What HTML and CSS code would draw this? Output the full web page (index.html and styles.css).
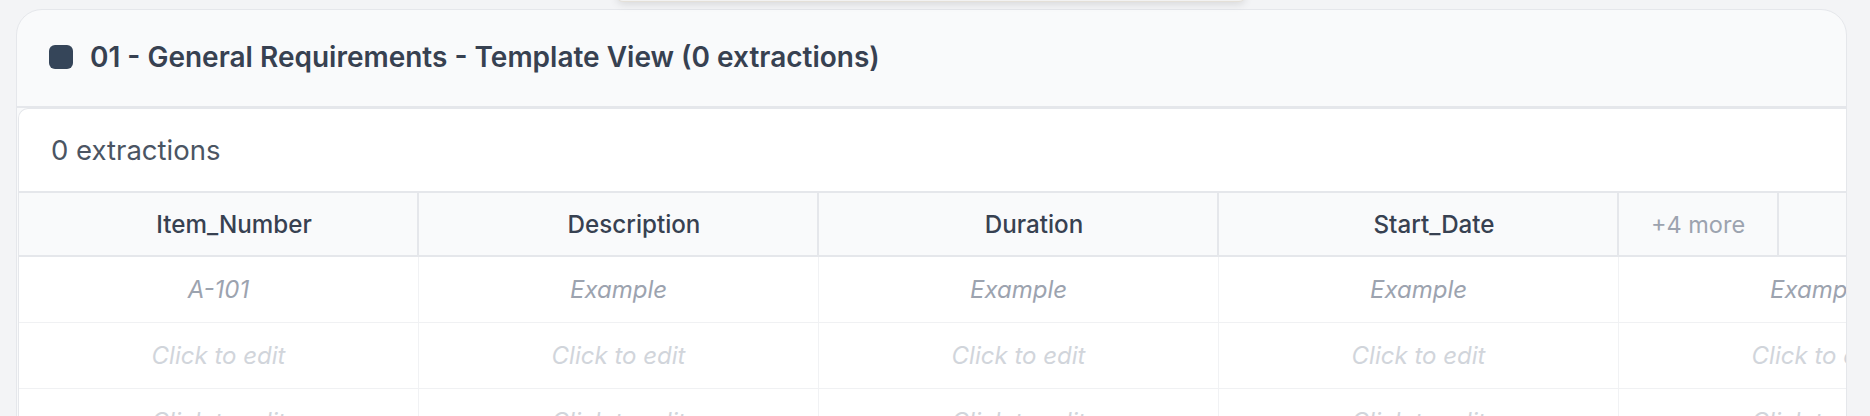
FILE: index.html
```html
<!DOCTYPE html>
<html lang="en">
<head>
<meta charset="utf-8">
<title>Template View</title>
<link rel="stylesheet" href="styles.css">
</head>
<body>
<div class="page">
  <div class="floating-bar"></div>
  <section class="card">
    <header class="card-header">
      <span class="cat-icon"></span>
      <h2 class="card-title">01 - General Requirements - Template View (0 extractions)</h2>
    </header>
    <div class="card-body">
      <div class="panel">
        <div class="panel-summary">0 extractions</div>
        <div class="grid">
          <div class="grid-head">
            <div class="th">Item_Number</div>
            <div class="th">Description</div>
            <div class="th">Duration</div>
            <div class="th">Start_Date</div>
            <div class="th th-more">+4 more</div>
            <div class="th th-empty"></div>
          </div>
          <div class="grid-row">
            <div class="td example">A-101</div>
            <div class="td example">Example</div>
            <div class="td example">Example</div>
            <div class="td example">Example</div>
            <div class="td example">Example</div>
          </div>
          <div class="grid-row">
            <div class="td placeholder">Click to edit</div>
            <div class="td placeholder">Click to edit</div>
            <div class="td placeholder">Click to edit</div>
            <div class="td placeholder">Click to edit</div>
            <div class="td placeholder">Click to edit</div>
          </div>
          <div class="grid-row">
            <div class="td placeholder">Click to edit</div>
            <div class="td placeholder">Click to edit</div>
            <div class="td placeholder">Click to edit</div>
            <div class="td placeholder">Click to edit</div>
            <div class="td placeholder">Click to edit</div>
          </div>
        </div>
      </div>
    </div>
  </section>
</div>
</body>
</html>
```

FILE: styles.css
```css
* { box-sizing: border-box; }

html, body {
  margin: 0;
  padding: 0;
  background: #f3f4f6;
  font-family: Inter, "Noto Sans", "Liberation Sans", sans-serif;
  overflow: hidden;
}

.page {
  position: relative;
  padding: 9px 23px 0 16px;
  height: 416px;
}

.floating-bar {
  position: absolute;
  left: 617px;
  top: -8px;
  width: 628px;
  height: 10px;
  background: #f2f2f2;
  border-bottom: 1px solid #e4e0d8;
  border-radius: 0 0 6px 6px;
  box-shadow: 0 2px 8px rgba(0, 0, 0, 0.12);
  z-index: 2;
}

.card {
  border: 1px solid #e5e7eb;
  border-radius: 26px;
  background: #f9fafb;
  overflow: hidden;
  height: 500px;
}

.card-header {
  height: 98px;
  display: flex;
  align-items: center;
  gap: 17px;
  padding: 0 32px 2px 32px;
  border-bottom: 2px solid #e5e7eb;
}

.cat-icon {
  width: 24px;
  height: 24px;
  border-radius: 6px;
  background: #354559;
  flex-shrink: 0;
}

.card-title {
  margin: 0;
  font-size: 28px;
  font-weight: 600;
  color: #374151;
  letter-spacing: 0;
  white-space: nowrap;
}

.card-body {
  padding-left: 1px;
}

.panel {
  width: 2400px;
  background: #ffffff;
  border-top: 1px solid #e5e7eb;
  border-left: 1px solid #e5e7eb;
  border-top-left-radius: 10px;
}

.panel-summary {
  height: 82px;
  display: flex;
  align-items: center;
  padding-left: 32px;
  font-size: 27.5px;
  color: #4b5563;
}

.grid-head {
  display: flex;
  height: 66px;
  background: #f9fafb;
  border-top: 2px solid #e5e7eb;
  border-bottom: 2px solid #e5e7eb;
}

.th {
  flex: 0 0 400px;
  display: flex;
  align-items: center;
  justify-content: center;
  padding-left: 32px;
  font-size: 24.2px;
  font-weight: 500;
  color: #374151;
  border-right: 2px solid #e5e7eb;
}

.th-more {
  flex-basis: 160px;
  padding-left: 0;
  font-weight: 400;
  font-size: 23.5px;
  color: #9ca3af;
}

.th-empty {
  flex-basis: 400px;
}

.grid-row {
  display: flex;
  height: 66px;
  border-bottom: 1px solid #f0f1f3;
}

.td {
  flex: 0 0 400px;
  display: flex;
  align-items: center;
  justify-content: center;
  font-size: 24px;
  font-style: italic;
  border-right: 1px solid #f1f2f4;
}

.example { color: #9ca3af; }
.placeholder { color: #d1d5db; }
```
